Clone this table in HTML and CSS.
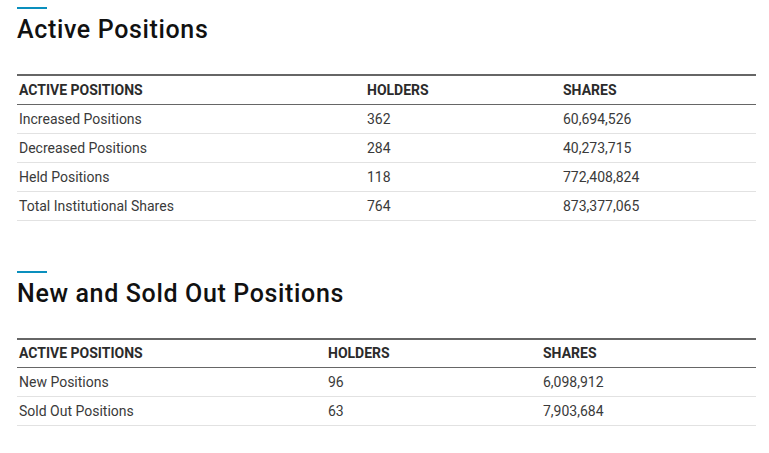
FILE: index.html
```html
<!DOCTYPE html>
<html>
<head>
<meta charset="utf-8">
<link rel="stylesheet" href="styles.css">
</head>
<body>
<div class="page">
  <section class="section">
    <div class="accent"></div>
    <h2 class="title">Active Positions</h2>
    <table class="data data-active">
      <colgroup><col class="c1"><col class="c2"><col class="c3"></colgroup>
      <thead>
        <tr><th>ACTIVE POSITIONS</th><th>HOLDERS</th><th>SHARES</th></tr>
      </thead>
      <tbody>
        <tr><td>Increased Positions</td><td>362</td><td>60,694,526</td></tr>
        <tr><td>Decreased Positions</td><td>284</td><td>40,273,715</td></tr>
        <tr><td>Held Positions</td><td>118</td><td>772,408,824</td></tr>
        <tr><td>Total Institutional Shares</td><td>764</td><td>873,377,065</td></tr>
      </tbody>
    </table>
  </section>
  <section class="section">
    <div class="accent"></div>
    <h2 class="title">New and Sold Out Positions</h2>
    <table class="data data-new">
      <colgroup><col class="c1"><col class="c2"><col class="c3"></colgroup>
      <thead>
        <tr><th>ACTIVE POSITIONS</th><th>HOLDERS</th><th>SHARES</th></tr>
      </thead>
      <tbody>
        <tr><td>New Positions</td><td>96</td><td>6,098,912</td></tr>
        <tr><td>Sold Out Positions</td><td>63</td><td>7,903,684</td></tr>
      </tbody>
    </table>
  </section>
</div>
</body>
</html>
```

FILE: styles.css
```css
* { box-sizing: border-box; }
html, body { margin: 0; padding: 0; background: #fff; }
body { font-family: Roboto, "Liberation Sans", Arial, sans-serif; color: #333; }
.page { padding: 7px 13px 0 17px; display: flex; flex-direction: column; gap: 50px; }
.section { display: flex; flex-direction: column; }
.accent { width: 30px; height: 2px; background: #0a8fbd; }
.title {
  margin: 6px 0 0 0;
  font-size: 25px;
  line-height: 30px;
  font-weight: 500;
  color: #111;
  letter-spacing: 0.65px;
}
.data {
  margin-top: 29px;
  width: 739px;
  border-collapse: collapse;
  table-layout: fixed;
  font-size: 14px;
}
.data thead tr { border-top: 2px solid #666; border-bottom: 1px solid #666; }
.data th {
  text-align: left;
  font-weight: 700;
  color: #2b2b2b;
  height: 29px;
  padding: 0 2px;
}
.data td {
  height: 29px;
  padding: 0 2px;
  color: #3a3a3a;
}
.data tbody tr { border-bottom: 1px solid #e2e2e2; }
.data-active .c1 { width: 348px; }
.data-active .c2 { width: 196px; }
.data-new .c1 { width: 309px; }
.data-new .c2 { width: 215px; }
```
